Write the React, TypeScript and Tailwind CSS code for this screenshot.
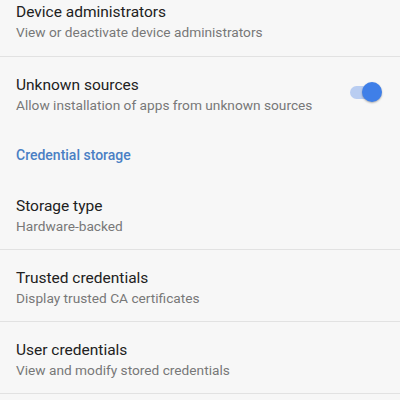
import React from 'react'

const font = { fontFamily: 'Roboto, "Noto Sans", sans-serif' }

function Row({ title, summary, first, divider = true, toggle }: { title: string; summary: string; first?: boolean; divider?: boolean; toggle?: boolean }) {
  return (
    <div
      className={`flex items-start justify-between pl-4 pr-[19px] ${first ? 'pt-[1px] h-[57px]' : 'pt-[17px] h-[72px]'} ${divider ? 'border-b border-[#e2e2e2]' : ''}`}
    >
      <div className="flex flex-col">
        <div className="text-[15.5px] leading-[22px] text-[#212121]">{title}</div>
        <div className="text-[13.7px] leading-[18px] text-[#787878]">{summary}</div>
      </div>
      {toggle && (
        <div className="relative mt-[8px] w-[32px] h-[20px] flex items-center">
          <div className="w-[28px] h-[13px] rounded-full bg-[#b9cdf1] ml-[1px]" />
          <div className="absolute right-[-1px] top-0 w-[20px] h-[20px] rounded-full bg-[#3f7fe8] shadow-[0_1px_2px_rgba(0,0,0,0.3)]" />
        </div>
      )}
    </div>
  )
}

export default function App() {
  return (
    <div className="w-[400px] h-[400px] overflow-hidden bg-[#f7f7f7]" style={font}>
      <Row first title="Device administrators" summary="View or deactivate device administrators" />
      <Row title="Unknown sources" summary="Allow installation of apps from unknown sources" divider={false} toggle />
      <div className="h-[49px] pl-4 pt-4 text-[14px] leading-5 font-medium text-[#4a7fc4]">Credential storage</div>
      <Row title="Storage type" summary="Hardware-backed" />
      <Row title="Trusted credentials" summary="Display trusted CA certificates" />
      <Row title="User credentials" summary="View and modify stored credentials" />
    </div>
  )
}
